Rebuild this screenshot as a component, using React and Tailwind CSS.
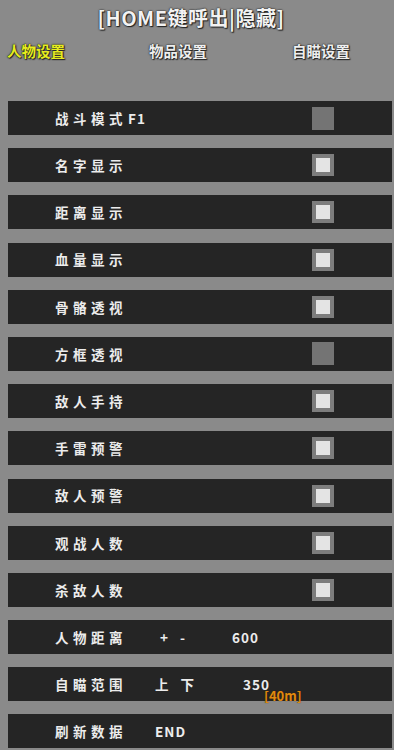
import React from "react";

const rows = [
  { label: "战斗模式", extra: "F1", box: "off" },
  { label: "名字显示", box: "on" },
  { label: "距离显示", box: "on" },
  { label: "血量显示", box: "on" },
  { label: "骨骼透视", box: "on" },
  { label: "方框透视", box: "off" },
  { label: "敌人手持", box: "on" },
  { label: "手雷预警", box: "on" },
  { label: "敌人预警", box: "on" },
  { label: "观战人数", box: "on" },
  { label: "杀敌人数", box: "on" },
];

const outline = { textShadow: "0 0 2px #222, 0 0 1px #222, 1px 1px 1px #222" };

const Box = ({ on }) =>
  on ? (
    <div className="w-[22px] h-[22px] bg-[#7d7d7d] p-[4px]">
      <div className="w-full h-full bg-[#e4e4e4]" />
    </div>
  ) : (
    <div className="w-[22px] h-[23px] bg-[#747474]" />
  );

const Row = ({ children }) => (
  <div className="h-[34px] bg-[#252525] flex items-center pl-[47px] text-[13.5px] font-bold text-[#ececec] tracking-[4.5px] relative">
    {children}
  </div>
);

export default function App() {
  return (
    <div
      className="w-[394px] h-[750px] bg-[#8a8a8a] overflow-hidden flex flex-col"
      style={{ fontFamily: '"Noto Sans CJK SC", "Noto Sans", sans-serif' }}
    >
      <div className="h-[36px] flex items-center justify-center pr-[12px] text-[20px] font-bold text-[#f2f2f2] tracking-[0.5px]" style={outline}>
        [HOME键呼出|隐藏]
      </div>
      <div className="h-[30px] flex items-center text-[14.5px] font-bold text-[#eeeeee]" style={outline}>
        <span className="ml-[7px] text-[#e6ec1e]">人物设置</span>
        <span className="ml-[84px]">物品设置</span>
        <span className="ml-[85px]">自瞄设置</span>
      </div>
      <div className="flex flex-col gap-[13.2px] ml-[8px] mr-[2px] mt-[35px]">
        {rows.map((r) => (
          <Row key={r.label}>
            <span className="w-[257px]">
              {r.label}
              {r.extra && <span className="ml-[1px] tracking-[1px]">{r.extra}</span>}
            </span>
            <Box on={r.box === "on"} />
          </Row>
        ))}
        <Row>
          <span className="w-[105px]">人物距离</span>
          <span className="w-[72px]">+ -</span>
          <span className="tracking-[1px]">600</span>
        </Row>
        <Row>
          <span className="w-[100px]">自瞄范围</span>
          <span className="w-[88px]">上 下</span>
          <span className="tracking-[1px]">350</span>
          <span className="absolute left-[256px] top-[19px] text-[13px] tracking-normal text-[#e08a10]" style={{ textShadow: "0 0 1px #3a2000" }}>
            [40m]
          </span>
        </Row>
        <Row>
          <span className="w-[100px]">刷新数据</span>
          <span className="tracking-[1px]">END</span>
        </Row>
      </div>
    </div>
  );
}
